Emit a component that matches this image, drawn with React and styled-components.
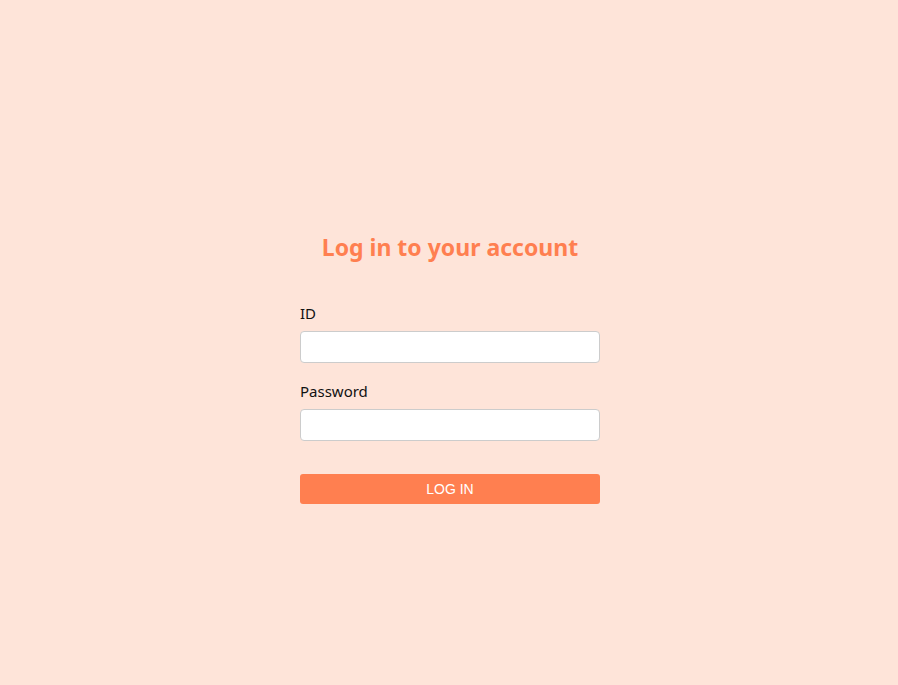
import React from 'react';
import styled, { createGlobalStyle } from 'styled-components';

const GlobalStyle = createGlobalStyle`
  html, body {
    margin: 0;
    background: #fee4d9;
  }
`;

const Page = styled.div`
  min-height: 685px;
  display: flex;
  justify-content: center;
  padding: 232px 0 0 2px;
  box-sizing: border-box;
  font-family: 'Noto Sans', 'Open Sans', sans-serif;
`;

const Form = styled.form`
  width: 300px;
  display: flex;
  flex-direction: column;
`;

const Title = styled.h1`
  margin: 0 0 41px;
  font-size: 23px;
  line-height: 30px;
  font-weight: 700;
  color: #ff7f50;
  text-align: center;
`;

const Field = styled.div`
  display: flex;
  flex-direction: column;
  gap: 8px;
  margin-bottom: 18px;
`;

const Label = styled.label`
  font-size: 15px;
  line-height: 20px;
  color: #111;
`;

const Input = styled.input`
  height: 32px;
  box-sizing: border-box;
  border: 1px solid #cccccc;
  border-radius: 4px;
  background: #fff;
  padding: 0 8px;
  font-size: 15px;
  outline: none;
`;

const Button = styled.button`
  margin-top: 15px;
  height: 30px;
  border: none;
  border-radius: 3px;
  background: #ff7f50;
  color: #fff;
  font-family: 'Liberation Sans', Arial, sans-serif;
  font-size: 14px;
  text-transform: uppercase;
  cursor: pointer;
`;

export default function App() {
  return (
    <>
      <GlobalStyle />
      <Page>
        <Form onSubmit={e => e.preventDefault()}>
          <Title>Log in to your account</Title>
          <Field>
            <Label htmlFor="id">ID</Label>
            <Input id="id" type="text" />
          </Field>
          <Field>
            <Label htmlFor="password">Password</Label>
            <Input id="password" type="password" />
          </Field>
          <Button type="submit">Log in</Button>
        </Form>
      </Page>
    </>
  );
}
